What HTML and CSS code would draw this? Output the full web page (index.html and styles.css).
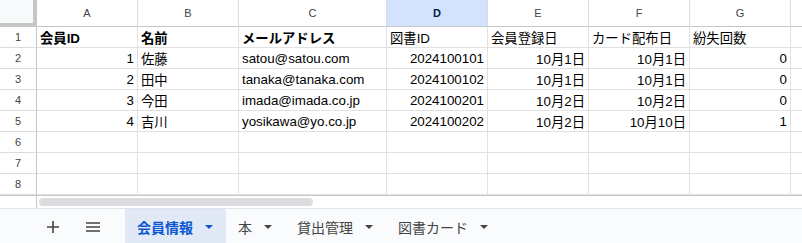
FILE: index.html
```html
<!doctype html>
<html lang="ja">
<head>
  <meta charset="UTF-8" />
  <title>会員情報 - スプレッドシート</title>
  <link rel="stylesheet" href="styles.css">
</head>
<body>
  <div class="sheet">
    <div class="corner"></div>
    <div class="col-head">A</div>
    <div class="col-head">B</div>
    <div class="col-head">C</div>
    <div class="col-head active">D</div>
    <div class="col-head">E</div>
    <div class="col-head">F</div>
    <div class="col-head">G</div>
    <div class="col-head last"></div>

    <div class="row-head">1</div>
    <div class="cell bold">会員ID</div>
    <div class="cell bold">名前</div>
    <div class="cell bold">メールアドレス</div>
    <div class="cell">図書ID</div>
    <div class="cell">会員登録日</div>
    <div class="cell">カード配布日</div>
    <div class="cell">紛失回数</div>
    <div class="cell last"></div>

    <div class="row-head">2</div>
    <div class="cell num">1</div>
    <div class="cell">佐藤</div>
    <div class="cell">satou@satou.com</div>
    <div class="cell num">2024100101</div>
    <div class="cell num">10月1日</div>
    <div class="cell num">10月1日</div>
    <div class="cell num">0</div>
    <div class="cell last"></div>

    <div class="row-head">3</div>
    <div class="cell num">2</div>
    <div class="cell">田中</div>
    <div class="cell">tanaka@tanaka.com</div>
    <div class="cell num">2024100102</div>
    <div class="cell num">10月1日</div>
    <div class="cell num">10月1日</div>
    <div class="cell num">0</div>
    <div class="cell last"></div>

    <div class="row-head">4</div>
    <div class="cell num">3</div>
    <div class="cell">今田</div>
    <div class="cell">imada@imada.co.jp</div>
    <div class="cell num">2024100201</div>
    <div class="cell num">10月2日</div>
    <div class="cell num">10月2日</div>
    <div class="cell num">0</div>
    <div class="cell last"></div>

    <div class="row-head">5</div>
    <div class="cell num">4</div>
    <div class="cell">吉川</div>
    <div class="cell">yosikawa@yo.co.jp</div>
    <div class="cell num">2024100202</div>
    <div class="cell num">10月2日</div>
    <div class="cell num">10月10日</div>
    <div class="cell num">1</div>
    <div class="cell last"></div>

    <div class="row-head">6</div>
    <div class="cell"></div><div class="cell"></div><div class="cell"></div><div class="cell"></div>
    <div class="cell"></div><div class="cell"></div><div class="cell"></div><div class="cell last"></div>

    <div class="row-head">7</div>
    <div class="cell"></div><div class="cell"></div><div class="cell"></div><div class="cell"></div>
    <div class="cell"></div><div class="cell"></div><div class="cell"></div><div class="cell last"></div>

    <div class="row-head">8</div>
    <div class="cell"></div><div class="cell"></div><div class="cell"></div><div class="cell"></div>
    <div class="cell"></div><div class="cell"></div><div class="cell"></div><div class="cell last"></div>
  </div>

  <div class="hscroll">
    <div class="hscroll-gap"></div>
    <div class="hscroll-track"><div class="thumb"></div></div>
  </div>

  <nav class="tabbar">
    <button class="icon-btn" aria-label="シートを追加">
      <svg width="12" height="12" viewBox="0 0 12 12"><path d="M6 0v12M0 6h12" stroke="#444" stroke-width="1.6" fill="none"/></svg>
    </button>
    <button class="icon-btn" aria-label="すべてのシート">
      <svg width="14" height="10" viewBox="0 0 14 10"><path d="M0 1h14M0 5h14M0 9h14" stroke="#444" stroke-width="1.6" fill="none"/></svg>
    </button>
    <div class="tab active">会員情報<span class="caret"></span></div>
    <div class="tab">本<span class="caret"></span></div>
    <div class="tab">貸出管理<span class="caret"></span></div>
    <div class="tab">図書カード<span class="caret"></span></div>
  </nav>
</body>
</html>
```

FILE: styles.css
```css
* { box-sizing: border-box; }
body {
  margin: 0;
  width: 802px;
  height: 243px;
  overflow: hidden;
  background: #fff;
  font-family: "Liberation Sans", Arial, "Noto Sans CJK JP", sans-serif;
  color: #000;
}
.sheet {
  display: grid;
  grid-template-columns: 37px 101px 101px 148px 101px 101px 101px 101px 1fr;
  grid-template-rows: 27px repeat(8, 21px);
}
.corner {
  background: #f8f9fa;
  border-right: 4px solid #c4c7c5;
  border-bottom: 4px solid #c4c7c5;
}
.col-head {
  display: flex;
  align-items: center;
  justify-content: center;
  font-size: 11px;
  color: #444;
  background: #fff;
  border-right: 1px solid #dadce0;
  border-bottom: 1px solid #c4c7c5;
}
.col-head.active {
  background: #d3e3fd;
  color: #041e49;
  font-weight: 700;
}
.col-head.last, .cell.last { border-right: none; }
.row-head {
  display: flex;
  align-items: center;
  justify-content: center;
  font-size: 11px;
  color: #444;
  background: #fff;
  border-right: 1px solid #c4c7c5;
  border-bottom: 1px solid #dadce0;
}
.cell {
  display: flex;
  align-items: center;
  padding: 0 3px;
  font-size: 13.33px;
  white-space: nowrap;
  overflow: hidden;
  border-right: 1px solid #e1e1e1;
  border-bottom: 1px solid #e1e1e1;
}
.cell.num { justify-content: flex-end; }
.cell.bold { font-weight: 700; }

.hscroll {
  display: flex;
  height: 14px;
  border-top: 1px solid #c4c7c5;
  border-bottom: 1px solid #e1e3e6;
}
.hscroll-gap { width: 37px; border-right: 1px solid #c4c7c5; }
.hscroll-track { flex: 1; padding: 2px 2px; }
.thumb {
  width: 274px;
  height: 8px;
  border-radius: 4px;
  background: #dadce0;
}

.tabbar {
  display: flex;
  align-items: stretch;
  height: 35px;
  padding-left: 33px;
  background: #f9fbfd;
  font-size: 14px;
  color: #444;
}
.icon-btn {
  width: 40px;
  border: none;
  background: none;
  padding: 0;
  display: flex;
  align-items: center;
  justify-content: center;
}
.tab {
  display: flex;
  align-items: center;
  gap: 12px;
  padding: 0 13px 0 12px;
}
.icon-btn + .tab { margin-left: 12px; }
.tab.active {
  background: #e1e9f7;
  color: #0b57d0;
  font-weight: 700;
}
.caret {
  width: 0;
  height: 0;
  border-left: 4px solid transparent;
  border-right: 4px solid transparent;
  border-top: 4px solid #444;
}
.tab.active .caret { border-top-color: #0b57d0; }
```
